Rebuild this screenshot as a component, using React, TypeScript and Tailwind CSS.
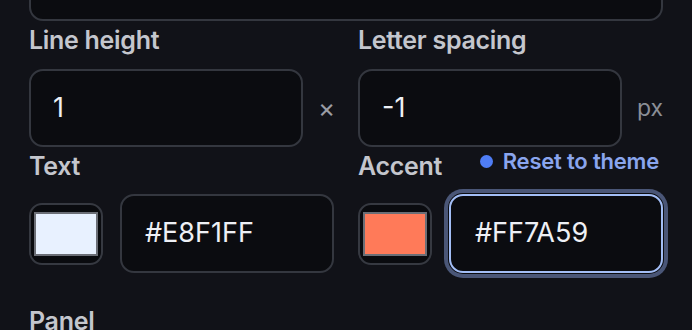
import React from "react";

const font = { fontFamily: "Inter, 'Noto Sans', sans-serif" };

function Label({ children }: { children: React.ReactNode }) {
  return (
    <div className="text-[25px] leading-[30px] font-semibold text-[#c4c6cd] tracking-[-0.3px]">
      {children}
    </div>
  );
}

function Swatch({ color }: { color: string }) {
  return (
    <div className="w-[74px] h-[62px] shrink-0 rounded-[13px] border-2 border-[#363941] bg-[#0a0b0f] flex items-center justify-center">
      <div
        className="w-[64px] h-[44px] border-2 border-[#6b6e76]"
        style={{ backgroundColor: color }}
      />
    </div>
  );
}

export default function App() {
  return (
    <div
      className="w-[692px] h-[330px] overflow-hidden bg-[#111218] px-[29px]"
      style={font}
    >
      <div className="-mt-[58px] h-[79px] rounded-[14px] border-2 border-[#34373f] bg-[#0b0c10]" />

      <div className="grid grid-cols-2 gap-x-[24px] mt-[4px]">
        <div>
          <Label>Line height</Label>
          <div className="mt-[14px] flex items-center gap-[15px]">
            <div className="flex-1 h-[78px] rounded-[14px] border-2 border-[#34373f] bg-[#0b0c10] flex items-center pl-[22px] text-[27px] text-[#eef0f5]">
              1
            </div>
            <div className="w-[16px] text-[26px] leading-none text-[#9a9ca4]">×</div>
          </div>
        </div>
        <div>
          <Label>Letter spacing</Label>
          <div className="mt-[14px] flex items-center gap-[15px]">
            <div className="flex-1 h-[78px] rounded-[14px] border-2 border-[#34373f] bg-[#0b0c10] flex items-center pl-[22px] text-[27px] text-[#eef0f5]">
              -1
            </div>
            <div className="text-[23px] text-[#8b8e96]">px</div>
          </div>
        </div>

        <div className="mt-[4px]">
          <Label>Text</Label>
          <div className="mt-[13px] flex items-center gap-[17px]">
            <Swatch color="#E8F1FF" />
            <div className="flex-1 h-[79px] rounded-[14px] border-2 border-[#34373f] bg-[#0b0c10] flex items-center pl-[23px] text-[27px] text-[#eef0f5]">
              #E8F1FF
            </div>
          </div>
        </div>
        <div className="mt-[4px]">
          <div className="flex items-start justify-between">
            <Label>Accent</Label>
            <div className="flex items-center gap-[10px] pr-[4px] text-[22px] leading-[20px] font-semibold text-[#8aa5ee] tracking-[-0.2px]">
              <span className="w-[13px] h-[13px] rounded-full bg-[#4f7df5]" />
              Reset to theme
            </div>
          </div>
          <div className="mt-[13px] flex items-center gap-[17px]">
            <Swatch color="#FF7A59" />
            <div className="flex-1 h-[79px] rounded-[14px] border-2 border-[#a3bef6] bg-[#0b0c10] ring-4 ring-[#4a5677] ring-offset-1 ring-offset-[#0b0c10] flex items-center pl-[24px] text-[27px] text-[#eef0f5]">
              #FF7A59
            </div>
          </div>
        </div>
      </div>

      <div className="mt-[33px]">
        <Label>Panel</Label>
      </div>
    </div>
  );
}
